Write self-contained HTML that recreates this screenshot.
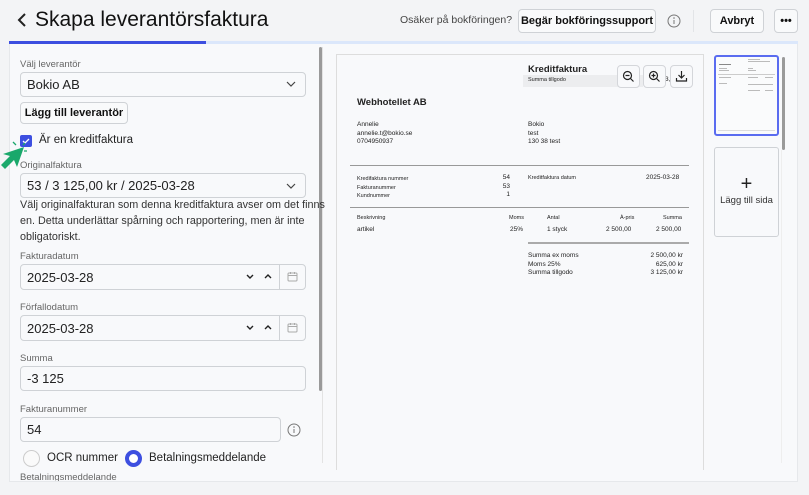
<!DOCTYPE html>
<html><head><meta charset="utf-8">
<style>
*{box-sizing:border-box;margin:0;padding:0}
body{width:809px;height:495px;overflow:hidden;background:#f3f4f6;font-family:"Liberation Sans",sans-serif;color:#1a1a1a;position:relative}
.a{position:absolute}
.btn{position:absolute;border:1px solid #cfd2d6;border-radius:4px;background:#f9fafb;font-weight:bold;font-size:11px;display:flex;align-items:center;justify-content:center;color:#111;white-space:nowrap}
.lbl{position:absolute;font-size:9.5px;color:#666}
.inp{position:absolute;border:1px solid #cfd2d6;border-radius:4px;background:#f8f9fb;font-size:13px;display:flex;align-items:center;padding-left:6px;color:#222}
.d{position:absolute;font-size:6.5px;color:#222;white-space:nowrap}
.db{font-weight:bold}
.hr{position:absolute;height:1px;background:#999}
.ib{position:absolute;width:23px;height:23px;border:1px solid #d4d6da;border-radius:4px;background:#f8f9fb}
.tb{position:absolute;height:1px;background:#bbb}
</style></head><body>
<svg class="a" style="left:16px;top:12px" width="12" height="16"><path d="M9 2 L3 8 L9 14" stroke="#222" stroke-width="2" fill="none"/></svg>
<div class="a" style="left:35px;top:8px;font-size:21px;color:#111">Skapa leverantörsfaktura</div>
<div class="a" style="left:400px;top:14px;font-size:10.5px;color:#444;white-space:nowrap">Osäker på bokföringen?</div>
<div class="btn" style="left:518px;top:9px;width:138px;height:24px">Begär bokföringssupport</div>
<svg class="a" style="left:667px;top:14px" width="14" height="14"><circle cx="7" cy="7" r="6" stroke="#777" fill="none"/><path d="M7 6v4" stroke="#777"/><circle cx="7" cy="4" r="0.8" fill="#777"/></svg>
<div class="a" style="left:693px;top:10px;width:1px;height:22px;background:#e2e4e7"></div>
<div class="btn" style="left:710px;top:9px;width:54px;height:24px">Avbryt</div>
<div class="btn" style="left:774px;top:9px;width:24px;height:24px">•••</div>
<div class="a" style="left:9px;top:41px;width:789px;height:3px;background:#dbe7fb"></div>
<div class="a" style="left:9px;top:41px;width:197px;height:3px;background:#3d4fe0"></div>
<div class="a" style="left:9px;top:44px;width:789px;height:438px;background:#f8f9fb;border:1px solid #e6e8eb;border-top:none"></div>
<div class="a" style="left:319px;top:47px;width:3px;height:344px;background:#9a9a9a;border-radius:2px"></div>
<div class="a" style="left:322px;top:47px;width:1px;height:416px;background:#e3e3e3"></div>
<div class="lbl" style="left:20px;top:59px">Välj leverantör</div>
<div class="inp" style="left:20px;top:72px;width:286px;height:25px">Bokio AB</div>
<svg class="a" style="left:286px;top:81px" width="10" height="7"><path d="M1 1l4 4 4-4" stroke="#444" fill="none" stroke-width="1.2"/></svg>
<div class="btn" style="left:20px;top:102px;width:108px;height:22px">Lägg till leverantör</div>
<div class="a" style="left:20px;top:135px;width:12px;height:12px;background:#3d4fe0;border-radius:2px"></div>
<svg class="a" style="left:20px;top:135px" width="12" height="12"><path d="M3 6l2 2 4-4" stroke="#fff" stroke-width="1.3" fill="none"/></svg>
<div class="a" style="left:39px;top:134px;font-size:11.5px;color:#222">Är en kreditfaktura</div>
<svg class="a" style="left:0;top:138px" width="34" height="34"><path d="M24 9 L17 29 L14 22 L5 31 L1 27 L10 18 L3 16 Z" fill="#1aa86b"/><path d="M13 4l3 3M25 5l-2 2M27 13l-3 0" stroke="#1aa86b" stroke-width="1.3"/></svg>
<div class="lbl" style="left:20px;top:160px">Originalfaktura</div>
<div class="inp" style="left:20px;top:173px;width:286px;height:25px">53 / 3 125,00 kr / 2025-03-28</div>
<svg class="a" style="left:286px;top:183px" width="10" height="7"><path d="M1 1l4 4 4-4" stroke="#444" fill="none" stroke-width="1.2"/></svg>
<div class="a" style="left:20px;top:197px;font-size:10.8px;line-height:16px;color:#333;white-space:nowrap">Välj originalfakturan som denna kreditfaktura avser om det finns<br>en. Detta underlättar spårning och rapportering, men är inte<br>obligatoriskt.</div>
<div class="lbl" style="left:20px;top:251px">Fakturadatum</div>
<div class="inp" style="left:20px;top:264px;width:286px;height:26px">2025-03-28</div>
<div class="a" style="left:279px;top:265px;width:1px;height:24px;background:#cfd2d6"></div>
<div class="lbl" style="left:20px;top:302px">Förfallodatum</div>
<div class="inp" style="left:20px;top:315px;width:286px;height:26px">2025-03-28</div>
<div class="a" style="left:279px;top:316px;width:1px;height:24px;background:#cfd2d6"></div>
<svg class="a" style="left:245px;top:272px" width="30" height="10"><path d="M2 3l3 3 3-3M20 6l3-3 3 3" stroke="#222" stroke-width="1.4" fill="none"/></svg>
<svg class="a" style="left:245px;top:323px" width="30" height="10"><path d="M2 3l3 3 3-3M20 6l3-3 3 3" stroke="#222" stroke-width="1.4" fill="none"/></svg>
<svg class="a" style="left:287px;top:271px" width="11" height="11"><rect x="1" y="2" width="9" height="8" rx="1" stroke="#aaa" fill="none"/><path d="M1 4.5h9M3.5 1v2M7.5 1v2" stroke="#aaa"/></svg>
<svg class="a" style="left:287px;top:322px" width="11" height="11"><rect x="1" y="2" width="9" height="8" rx="1" stroke="#aaa" fill="none"/><path d="M1 4.5h9M3.5 1v2M7.5 1v2" stroke="#aaa"/></svg>
<div class="lbl" style="left:20px;top:353px">Summa</div>
<div class="inp" style="left:20px;top:366px;width:286px;height:25px">-3 125</div>
<div class="lbl" style="left:20px;top:404px">Fakturanummer</div>
<div class="inp" style="left:20px;top:417px;width:261px;height:25px">54</div>
<svg class="a" style="left:287px;top:423px" width="14" height="14"><circle cx="7" cy="7" r="6" stroke="#777" fill="none"/><path d="M7 6v4" stroke="#777"/><circle cx="7" cy="4" r="0.8" fill="#777"/></svg>
<div class="a" style="left:23px;top:450px;width:17px;height:17px;border:1px solid #ccc;border-radius:50%;background:#fafafa"></div>
<div class="a" style="left:47px;top:452px;font-size:11.5px;color:#222">OCR nummer</div>
<div class="a" style="left:125px;top:450px;width:17px;height:17px;border:4.5px solid #3d4fe0;border-radius:50%;background:#fff"></div>
<div class="a" style="left:149px;top:452px;font-size:11.5px;color:#222">Betalningsmeddelande</div>
<div class="lbl" style="left:20px;top:472px;height:9px;overflow:hidden">Betalningsmeddelande</div>
<div class="a" style="left:336px;top:54px;width:368px;height:416px;border:1px solid #ddd;border-bottom:none;background:#f8f9fb"></div>
<div class="a" style="left:523px;top:75px;width:120px;height:12px;background:#ecedef"></div>
<div class="d db" style="left:528px;top:64px;font-size:9.5px">Kreditfaktura</div>
<div class="d" style="left:528px;top:77px;font-size:5.5px">Summa tillgodo</div>
<div class="d" style="left:665px;top:76px">3,0</div>
<div class="ib" style="left:617px;top:65px"></div><div class="ib" style="left:643px;top:65px"></div><div class="ib" style="left:670px;top:65px"></div>
<svg class="a" style="left:622px;top:70px" width="13" height="13"><circle cx="5.5" cy="5.5" r="4" stroke="#222" fill="none" stroke-width="1.2"/><path d="M8.5 8.5l3 3M3.5 5.5h4" stroke="#222" stroke-width="1.2"/></svg>
<svg class="a" style="left:648px;top:70px" width="13" height="13"><circle cx="5.5" cy="5.5" r="4" stroke="#222" fill="none" stroke-width="1.2"/><path d="M8.5 8.5l3 3M3.5 5.5h4M5.5 3.5v4" stroke="#222" stroke-width="1.2"/></svg>
<svg class="a" style="left:675px;top:70px" width="13" height="13"><path d="M6.5 1v7M3.5 5l3 3 3-3M1.5 8v3h10V8" stroke="#222" stroke-width="1.2" fill="none"/></svg>
<div class="d db" style="left:357px;top:97px;font-size:9.5px">Webhotellet AB</div>
<div class="d" style="left:357px;top:121px;line-height:8.5px">Annelie<br>annelie.t@bokio.se<br>0704950937</div>
<div class="d" style="left:528px;top:121px;line-height:8.5px">Bokio<br>test<br>130 38 test</div>
<div class="hr" style="left:350px;top:165px;width:339px"></div>
<div class="d" style="left:357px;top:175px;font-size:5.5px;line-height:8.5px">Kredifaktura nummer<br>Fakturanummer<br>Kundnummer</div>
<div class="d" style="left:490px;top:174px;line-height:8.5px;text-align:right;width:20px">54<br>53<br>1</div>
<div class="d" style="left:528px;top:175px;font-size:5.5px">Kreditfaktura datum</div>
<div class="d" style="left:646px;top:174px">2025-03-28</div>
<div class="hr" style="left:350px;top:207px;width:339px"></div>
<div class="d" style="left:357px;top:215px;font-size:5.5px">Beskrivning</div>
<div class="d" style="left:509px;top:215px;font-size:5.5px">Moms</div>
<div class="d" style="left:547px;top:215px;font-size:5.5px">Antal</div>
<div class="d" style="left:620px;top:215px;font-size:5.5px">À-pris</div>
<div class="d" style="left:663px;top:215px;font-size:5.5px">Summa</div>
<div class="d" style="left:357px;top:226px">artikel</div>
<div class="d" style="left:510px;top:226px">25%</div>
<div class="d" style="left:547px;top:226px">1 styck</div>
<div class="d" style="left:606px;top:226px">2 500,00</div>
<div class="d" style="left:656px;top:226px">2 500,00</div>
<div class="a" style="left:528px;top:242px;width:161px;height:2px;background:#aaa"></div>
<div class="d" style="left:528px;top:252px;line-height:8.5px">Summa ex moms<br>Moms 25%<br>Summa tillgodo</div>
<div class="d" style="left:640px;top:252px;line-height:8.5px;text-align:right;width:43px">2 500,00 kr<br>625,00 kr<br>3 125,00 kr</div>
<div class="a" style="left:714px;top:55px;width:65px;height:81px;border:2px solid #5a6cf0;border-radius:3px;background:#fafbfc"></div>
<div class="tb" style="left:748px;top:59px;width:12px"></div><div class="tb" style="left:748px;top:61px;width:22px"></div>
<div class="tb" style="left:719px;top:64px;width:12px;background:#888"></div>
<div class="tb" style="left:719px;top:68px;width:8px"></div><div class="tb" style="left:719px;top:70px;width:10px"></div>
<div class="tb" style="left:748px;top:68px;width:5px"></div><div class="tb" style="left:748px;top:70px;width:8px"></div>
<div class="tb" style="left:718px;top:74px;width:57px;background:#ccc"></div>
<div class="tb" style="left:719px;top:77px;width:12px"></div><div class="tb" style="left:748px;top:77px;width:10px"></div><div class="tb" style="left:765px;top:77px;width:8px"></div>
<div class="tb" style="left:719px;top:83px;width:8px"></div><div class="tb" style="left:748px;top:84px;width:25px"></div>
<div class="tb" style="left:748px;top:90px;width:12px"></div><div class="tb" style="left:765px;top:90px;width:8px"></div>
<div class="tb" style="left:718px;top:130px;width:57px;background:#ddd"></div>
<div class="a" style="left:714px;top:147px;width:65px;height:90px;border:1px solid #cfd2d6;border-radius:3px;background:#f8f9fb"></div>
<div class="a" style="left:714px;top:174px;width:65px;text-align:center;font-size:20px;color:#222;line-height:20px">+</div>
<div class="a" style="left:714px;top:195px;width:65px;text-align:center;font-size:9.5px;color:#333">Lägg till sida</div>
<div class="a" style="left:782px;top:57px;width:3px;height:93px;background:#9a9a9a;border-radius:2px"></div>
<div class="a" style="left:781px;top:150px;width:1px;height:313px;background:#eee"></div>
</body></html>
